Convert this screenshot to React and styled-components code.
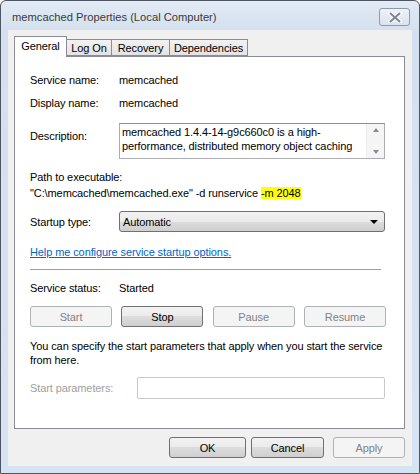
import React from 'react'
import styled, { createGlobalStyle } from 'styled-components'

const GlobalStyle = createGlobalStyle`
    html, body {
        margin: 0;
        padding: 0;
        background: #ffffff;
    }
    body {
        font-family: "Liberation Sans", Arial, sans-serif;
        font-size: 11px;
        letter-spacing: -0.1px;
        color: #000000;
    }
`;

const Window = styled.div`
    box-sizing: border-box;
    width: 420px;
    height: 474px;
    display: flex;
    flex-direction: column;
    border: 1px solid #4e5563;
    border-radius: 6px 6px 0 0;
    background: linear-gradient(#e2eaf4, #d3e0ef 32px, #d6e3f2);
    overflow: hidden;
`;

const TitleBar = styled.div`
    height: 29px;
    display: flex;
    align-items: center;
    justify-content: space-between;
    padding: 0 9px 0 11px;
    flex-shrink: 0;
`;

const Title = styled.span`
    font-family: "Liberation Sans", Arial, sans-serif;
    font-size: 11.2px;
    letter-spacing: 0;
    color: #3a3a3a;
    padding-top: 2px;
`;

const CloseButton = styled.div`
    box-sizing: border-box;
    width: 31px;
    height: 18px;
    margin-top: 3px;
    border: 1px solid #8d99ac;
    border-radius: 3px;
    background: linear-gradient(#eef2f8, #d9e3ef);
    display: flex;
    align-items: center;
    justify-content: center;
`;

const Client = styled.div`
    flex: 1;
    margin: 0 7px 7px 7px;
    background: #f0f0f0;
    display: flex;
    flex-direction: column;
    padding: 6px 7px 0 6px;
`;

const TabStrip = styled.div`
    display: flex;
    align-items: flex-end;
    height: 20px;
    position: relative;
    z-index: 1;
`;

const Tab = styled.div`
    box-sizing: border-box;
    width: ${p => p.w}px;
    height: ${p => (p.active ? '21px' : '17px')};
    margin-bottom: ${p => (p.active ? '-1px' : '0')};
    padding-bottom: ${p => (p.active ? '3px' : '0')};
    border: 1px solid #898c95;
    border-bottom: ${p => (p.active ? 'none' : '1px solid #898c95')};
    border-left: ${p => (p.active ? '1px solid #898c95' : 'none')};
    background: ${p => (p.active ? '#ffffff' : 'linear-gradient(#f2f2f2, #e3e3e3)')};
    font-size: 11px;
    display: flex;
    align-items: center;
    justify-content: center;
    color: #000;
`;

const Panel = styled.div`
    box-sizing: border-box;
    height: 373px;
    background: #ffffff;
    border: 1px solid #898c95;
    padding: 0 18px 0 15px;
    display: flex;
    flex-direction: column;
`;

const Row = styled.div`
    display: flex;
    align-items: ${p => p.align || 'center'};
    margin-top: ${p => p.mt || 0}px;
    line-height: 14px;
`;

const Label = styled.span`
    width: ${p => p.w || 89}px;
    flex-shrink: 0;
    color: ${p => (p.disabled ? '#a0a0a0' : '#000')};
    padding-top: ${p => p.pt || 0}px;
`;

const Value = styled.span`
    color: #000;
`;

const TextBox = styled.div`
    box-sizing: border-box;
    width: 266px;
    height: 36px;
    border: 1px solid #abadb3;
    border-top-color: #8e8f8f;
    display: flex;
    background: #fff;
`;

const TextBody = styled.div`
    flex: 1;
    padding: 1px 2px;
    line-height: 14px;
    overflow: hidden;
    white-space: nowrap;
`;

const ScrollBar = styled.div`
    width: 17px;
    background: #f5f5f5;
    border-left: 1px solid #ececec;
    display: flex;
    flex-direction: column;
    justify-content: space-between;
    align-items: center;
    padding: 4px 0;
`;

const Arrow = styled.div`
    width: 0;
    height: 0;
    border-left: 3.5px solid transparent;
    border-right: 3.5px solid transparent;
    ${p => (p.up ? 'border-bottom: 4px solid #8a8a8a;' : 'border-top: 4px solid #8a8a8a;')}
`;

const Block = styled.div`
    margin-top: ${p => p.mt || 0}px;
    line-height: 16px;
    white-space: nowrap;
`;

const Highlight = styled.span`
    background: #ffff00;
`;

const Select = styled.div`
    box-sizing: border-box;
    width: 266px;
    height: 21px;
    border: 1px solid #707070;
    border-radius: 3px;
    background: linear-gradient(#f2f2f2 0%, #ebebeb 50%, #dddddd 50%, #cfcfcf 100%);
    display: flex;
    align-items: center;
    justify-content: space-between;
    padding: 0 6px 0 3px;
    font-size: 11px;
`;

const DropArrow = styled.div`
    width: 0;
    height: 0;
    border-left: 4px solid transparent;
    border-right: 4px solid transparent;
    border-top: 4px solid #000;
`;

const HelpLink = styled.a`
    color: #0066cc;
    text-decoration: underline;
    margin-top: 13px;
    line-height: 14px;
    cursor: pointer;
    align-self: flex-start;
`;

const Separator = styled.div`
    width: 351px;
    height: 1px;
    background: #a0a0a0;
    margin-top: 10px;
`;

const ButtonRow = styled.div`
    display: flex;
    justify-content: ${p => p.justify || 'space-between'};
    gap: ${p => p.gap || 0}px;
    margin-top: ${p => p.mt || 0}px;
`;

const Button = styled.div`
    box-sizing: border-box;
    width: ${p => p.w || 82}px;
    height: 21px;
    border-radius: 3px;
    display: flex;
    align-items: center;
    justify-content: center;
    font-size: 11px;
    border: 1px solid ${p => (p.disabled ? '#adb2b5' : '#707070')};
    color: ${p => (p.disabled ? '#838383' : '#000')};
    background: ${p => (p.disabled
        ? '#f4f4f4'
        : 'linear-gradient(#f2f2f2 0%, #ebebeb 50%, #dddddd 50%, #cfcfcf 100%)')};
`;

const Paragraph = styled.p`
    margin: 12px 0 0 0;
    line-height: 14px;
    white-space: nowrap;
`;

const Input = styled.div`
    box-sizing: border-box;
    width: 248px;
    height: 22px;
    border: 1px solid #c8c8c8;
    border-radius: 2px;
    background: #fff;
`;

const Footer = styled.div`
    display: flex;
    justify-content: flex-end;
    margin-top: 8px;
`;

const CloseIcon = () => (
    <svg width="14" height="11" viewBox="0 0 14 11">
        <path d="M2 1 L12 10 M12 1 L2 10" stroke="#ffffff" strokeWidth="4" strokeLinecap="round" />
        <path d="M2.5 1.5 L11.5 9.5 M11.5 1.5 L2.5 9.5" stroke="#7d8796" strokeWidth="2" strokeLinecap="round" />
    </svg>
);

const App = () => {
    return (
        <>
            <GlobalStyle />
            <Window>
                <TitleBar>
                    <Title>memcached Properties (Local Computer)</Title>
                    <CloseButton><CloseIcon /></CloseButton>
                </TitleBar>
                <Client>
                    <TabStrip>
                        <Tab active w={53}>General</Tab>
                        <Tab w={45}>Log On</Tab>
                        <Tab w={58}>Recovery</Tab>
                        <Tab w={78}>Dependencies</Tab>
                    </TabStrip>
                    <Panel>
                        <Row mt={16}>
                            <Label>Service name:</Label>
                            <Value>memcached</Value>
                        </Row>
                        <Row mt={9}>
                            <Label>Display name:</Label>
                            <Value>memcached</Value>
                        </Row>
                        <Row mt={13} align="flex-start">
                            <Label pt={6}>Description:</Label>
                            <TextBox>
                                <TextBody>
                                    memcached 1.4.4-14-g9c660c0 is a high-<br />
                                    performance, distributed memory object caching
                                </TextBody>
                                <ScrollBar>
                                    <Arrow up />
                                    <Arrow />
                                </ScrollBar>
                            </TextBox>
                        </Row>
                        <Block mt={10}>
                            Path to executable:<br />
                            "C:\memcached\memcached.exe" -d runservice <Highlight>-m 2048</Highlight>
                        </Block>
                        <Row mt={10}>
                            <Label>Startup type:</Label>
                            <Select>
                                <span>Automatic</span>
                                <DropArrow />
                            </Select>
                        </Row>
                        <HelpLink>Help me configure service startup options.</HelpLink>
                        <Separator />
                        <Row mt={11}>
                            <Label>Service status:</Label>
                            <Value>Started</Value>
                        </Row>
                        <ButtonRow mt={11}>
                            <Button disabled>Start</Button>
                            <Button>Stop</Button>
                            <Button disabled>Pause</Button>
                            <Button disabled>Resume</Button>
                        </ButtonRow>
                        <Paragraph>
                            You can specify the start parameters that apply when you start the service<br />
                            from here.
                        </Paragraph>
                        <Row mt={10}>
                            <Label w={107} disabled>Start parameters:</Label>
                            <Input />
                        </Row>
                    </Panel>
                    <Footer>
                        <ButtonRow gap={5}>
                            <Button w={77}>OK</Button>
                            <Button w={73}>Cancel</Button>
                            <Button w={72} disabled style={{ marginLeft: 4 }}>Apply</Button>
                        </ButtonRow>
                    </Footer>
                </Client>
            </Window>
        </>
    )
}

export default App;
